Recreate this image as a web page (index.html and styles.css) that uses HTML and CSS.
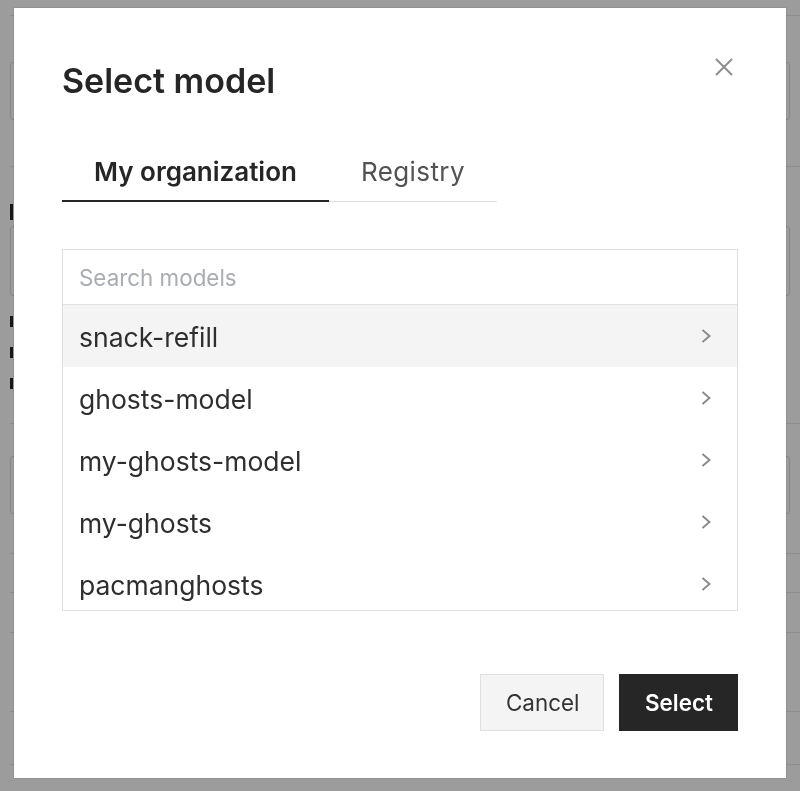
FILE: index.html
```html
<!DOCTYPE html>
<html lang="en">
<head>
<meta charset="utf-8">
<title>Select model</title>
<link rel="stylesheet" href="styles.css">
</head>
<body>
<div class="page">
  <div class="page-top"></div>
  <section class="page-section s1"><div class="field-box"></div></section>
  <section class="page-section s2">
    <div class="field-label"></div>
    <div class="field-box tall"></div>
    <div class="field-text"></div>
    <div class="field-text"></div>
    <div class="field-text"></div>
  </section>
  <section class="page-section s3"><div class="field-box"></div></section>
  <section class="page-section s4"></section>
  <section class="page-section s5"></section>
  <section class="page-section s6"></section>
  <section class="page-section s7"></section>
</div>

<div class="overlay">
  <div class="modal" role="dialog" aria-labelledby="modal-title">
    <div class="modal-header">
      <h2 class="modal-title" id="modal-title">Select model</h2>
      <button class="close-btn" aria-label="Close">
        <svg width="18" height="18" viewBox="0 0 18 18" aria-hidden="true"><path d="M1 1 L17 17 M17 1 L1 17" stroke="#8d8d8d" stroke-width="2" fill="none"/></svg>
      </button>
    </div>

    <div class="tabs" role="tablist">
      <button class="tab active" role="tab">My organization</button>
      <button class="tab" role="tab">Registry</button>
    </div>

    <div class="model-box">
      <input class="search" type="text" placeholder="Search models">
      <ul class="model-list">
        <li class="model-row hover"><span>snack-refill</span><svg class="chev" width="10" height="14" viewBox="0 0 10 14"><path d="M1.5 1 L8.5 7 L1.5 13" stroke="#8a8a8a" stroke-width="1.9" fill="none"/></svg></li>
        <li class="model-row"><span>ghosts-model</span><svg class="chev" width="10" height="14" viewBox="0 0 10 14"><path d="M1.5 1 L8.5 7 L1.5 13" stroke="#8a8a8a" stroke-width="1.9" fill="none"/></svg></li>
        <li class="model-row"><span>my-ghosts-model</span><svg class="chev" width="10" height="14" viewBox="0 0 10 14"><path d="M1.5 1 L8.5 7 L1.5 13" stroke="#8a8a8a" stroke-width="1.9" fill="none"/></svg></li>
        <li class="model-row"><span>my-ghosts</span><svg class="chev" width="10" height="14" viewBox="0 0 10 14"><path d="M1.5 1 L8.5 7 L1.5 13" stroke="#8a8a8a" stroke-width="1.9" fill="none"/></svg></li>
        <li class="model-row"><span>pacmanghosts</span><svg class="chev" width="10" height="14" viewBox="0 0 10 14"><path d="M1.5 1 L8.5 7 L1.5 13" stroke="#8a8a8a" stroke-width="1.9" fill="none"/></svg></li>
      </ul>
    </div>

    <div class="modal-footer">
      <button class="btn btn-secondary">Cancel</button>
      <button class="btn btn-primary">Select</button>
    </div>
  </div>
</div>
</body>
</html>
```
FILE: styles.css
```css
* { box-sizing: border-box; }

html, body {
  margin: 0;
  padding: 0;
  height: 100%;
  overflow: hidden;
}

body {
  font-family: Inter, "Noto Sans", sans-serif;
  background: #ffffff;
  color: #262626;
}

/* underlying page (mostly hidden by the modal) */
.page {
  display: flex;
  flex-direction: column;
  padding-left: 10px;
}
.page-top { height: 16px; border-bottom: 1px solid #e6e6e6; flex: none; }
.page-section { border-bottom: 1px solid #e6e6e6; padding-right: 10px; flex: none; }
.s1 { height: 151px; padding-top: 46px; }
.s2 { height: 257px; padding-top: 37px; }
.s3 { height: 130px; padding-top: 32px; }
.s4 { height: 39px; }
.s5 { height: 40px; }
.s6 { height: 79px; }
.s7 { height: 53px; }
.field-box { height: 58px; border: 1px solid #dcdcdc; border-radius: 3px; }
.field-box.tall { height: 70px; margin-top: 6px; }
.field-label { width: 3px; height: 16px; background: #262626; }
.field-text { width: 3px; height: 11px; background: #262626; margin-top: 20px; }

/* overlay + modal */
.overlay {
  position: fixed;
  inset: 0;
  background: rgba(0, 0, 0, 0.39);
}

.modal {
  position: absolute;
  top: 8px;
  left: 14px;
  width: 772px;
  height: 770px;
  background: #ffffff;
  box-shadow: 0 0 0 1px rgba(0, 0, 0, 0.06);
  padding: 48px 48px 47px;
  display: flex;
  flex-direction: column;
}

.modal-header {
  display: flex;
  justify-content: space-between;
  align-items: flex-start;
}

.modal-title {
  margin: 0;
  font-size: 34px;
  line-height: 50px;
  font-weight: 600;
  color: #262626;
}

.close-btn {
  width: 28px;
  height: 28px;
  margin-top: -3px;
  padding: 0;
  border: 0;
  background: transparent;
  display: flex;
  align-items: center;
  justify-content: center;
}

.tabs {
  display: flex;
  align-self: flex-start;
  margin-top: 38px;
  border-bottom: 1px solid #e0e0e0;
}

.tab {
  font-family: inherit;
  font-size: 26px;
  line-height: 32px;
  padding: 12px 32px 12px;
  margin-bottom: -1px;
  border: 0;
  border-bottom: 2px solid transparent;
  background: transparent;
  color: #525252;
  font-weight: 400;
  letter-spacing: 0.4px;
}

.tab.active {
  font-weight: 600;
  color: #262626;
  letter-spacing: 0;
  border-bottom-color: #262626;
}

.model-box {
  margin-top: 47px;
  border: 1px solid #e0e0e0;
}

.search {
  display: block;
  width: 100%;
  height: 55px;
  border: 0;
  border-bottom: 1px solid #e0e0e0;
  padding: 0 16px;
  font-family: inherit;
  font-size: 22.4px;
  line-height: 54px;
  color: #262626;
  outline: none;
}
.search::placeholder { color: #a8adb3; }

.model-list {
  list-style: none;
  margin: 0;
  padding: 0;
  height: 305px;
  overflow: hidden;
}

.model-row {
  height: 62px;
  padding: 2px 26px 0 16px;
  display: flex;
  align-items: center;
  justify-content: space-between;
  font-size: 26.5px;
  line-height: 60px;
  color: #2e2e2e;
}
.model-row.hover { background: #f4f4f4; }
.chev { flex: none; margin-top: -2px; }

.modal-footer {
  margin-top: auto;
  display: flex;
  justify-content: flex-end;
  gap: 15px;
}

.btn {
  height: 57px;
  padding: 0 25px;
  font-family: inherit;
  font-size: 22.4px;
  border: 1px solid transparent;
  cursor: pointer;
}
.btn-secondary {
  background: #f4f4f4;
  border-color: #e0e0e0;
  color: #333333;
  width: 124px;
}
.btn-primary {
  background: #262626;
  border-color: #262626;
  color: #ffffff;
  font-weight: 600;
  width: 119px;
}
```
